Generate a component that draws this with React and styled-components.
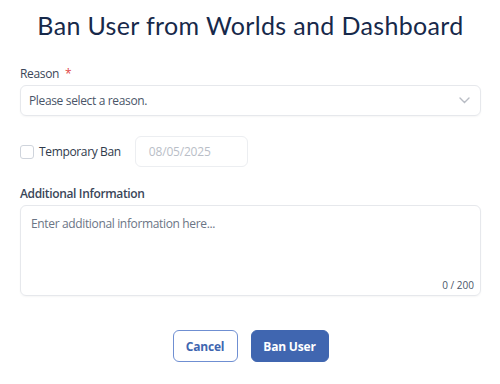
import React from 'react'
import styled, { createGlobalStyle } from 'styled-components'

const GlobalStyle = createGlobalStyle`
  body {
    margin: 0;
    background: #ffffff;
    font-family: 'Open Sans', 'Noto Sans', sans-serif;
  }
`

const Modal = styled.div`
  width: 500px;
  height: 384px;
  box-sizing: border-box;
  padding: 8px 19px 0 20px;
  display: flex;
  flex-direction: column;
`

const Title = styled.h1`
  margin: 0;
  font-family: 'Lato', sans-serif;
  font-weight: 400;
  font-size: 25px;
  line-height: 34px;
  text-align: center;
  color: #17294a;
  letter-spacing: 0.35px;
`

const Label = styled.label`
  display: block;
  font-size: 12px;
  letter-spacing: -0.35px;
  line-height: 16px;
  font-weight: ${(p) => p.$weight || 400};
  color: #3a4658;
  margin-top: ${(p) => p.$top || 0}px;
  margin-bottom: ${(p) => p.$bottom || 4}px;
`

const Required = styled.span`
  color: #e04646;
  margin-left: 6px;
`

const Select = styled.div`
  height: 31px;
  box-sizing: border-box;
  border: 1px solid #e6e8ec;
  border-radius: 6px;
  box-shadow: 0 1px 2px rgba(0, 0, 0, 0.04);
  display: flex;
  align-items: center;
  justify-content: space-between;
  padding: 0 10px 0 8px;
  font-size: 12px;
  letter-spacing: -0.35px;
  color: #4a5568;
`

const Row = styled.div`
  display: flex;
  align-items: center;
  margin-top: 20px;
`

const Checkbox = styled.span`
  width: 14px;
  height: 14px;
  box-sizing: border-box;
  border: 1px solid #cfd4dc;
  border-radius: 3px;
  margin-right: 5px;
`

const CheckText = styled.span`
  font-size: 12px;
  letter-spacing: -0.35px;
  color: #2f3a4b;
  margin-right: 14px;
`

const DateInput = styled.div`
  width: 113px;
  height: 31px;
  box-sizing: border-box;
  border: 1px solid #eceef1;
  border-radius: 6px;
  display: flex;
  align-items: center;
  padding-left: 13px;
  font-size: 12px;
  letter-spacing: -0.2px;
  color: #b9bec7;
`

const TextArea = styled.div`
  position: relative;
  height: 91px;
  box-sizing: border-box;
  border: 1px solid #e6e8ec;
  border-radius: 6px;
  box-shadow: 0 1px 2px rgba(0, 0, 0, 0.04);
  padding: 9px 10px;
  font-size: 12px;
  letter-spacing: -0.35px;
  color: #6b7585;
`

const Counter = styled.span`
  position: absolute;
  right: 6px;
  bottom: 3px;
  font-size: 10px;
  letter-spacing: 0;
  color: #4a5568;
`

const Actions = styled.div`
  display: flex;
  justify-content: center;
  gap: 13px;
  margin-top: 34px;
`

const Button = styled.button`
  width: ${(p) => (p.$primary ? 78 : 65)}px;
  height: 32px;
  box-sizing: border-box;
  padding: 0;
  border-radius: 6px;
  font-family: 'Open Sans', 'Noto Sans', sans-serif;
  font-weight: 700;
  font-size: 12px;
  letter-spacing: -0.2px;
  border: 1px solid ${(p) => (p.$primary ? '#4066b0' : '#6f8fd2')};
  background: ${(p) => (p.$primary ? '#4066b0' : '#ffffff')};
  color: ${(p) => (p.$primary ? '#ffffff' : '#4066b0')};
`

const Chevron = () => (
  <svg width="11" height="7" viewBox="0 0 11 7">
    <path d="M1 1l4.5 4.5L10 1" fill="none" stroke="#b8bcc4" strokeWidth="1.4" strokeLinecap="round" />
  </svg>
)

const App = () => (
  <>
    <GlobalStyle />
    <Modal>
      <Title>Ban User from Worlds and Dashboard</Title>
      <Label $top={24} $bottom={3}>
        Reason<Required>*</Required>
      </Label>
      <Select>
        <span>Please select a reason.</span>
        <Chevron />
      </Select>
      <Row>
        <Checkbox />
        <CheckText>Temporary Ban</CheckText>
        <DateInput>08/05/2025</DateInput>
      </Row>
      <Label $top={19} $bottom={3} $weight={600}>Additional Information</Label>
      <TextArea>
        Enter additional information here...
        <Counter>0 / 200</Counter>
      </TextArea>
      <Actions>
        <Button>Cancel</Button>
        <Button $primary>Ban User</Button>
      </Actions>
    </Modal>
  </>
)

export default App
